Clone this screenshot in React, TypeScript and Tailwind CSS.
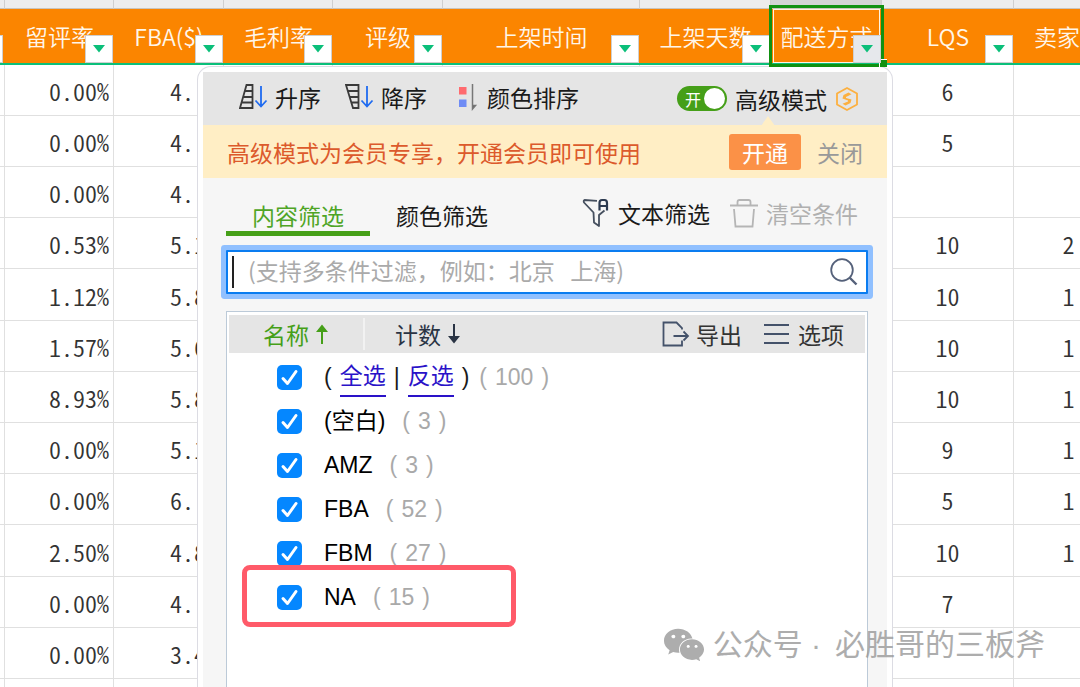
import { FaWeixin } from "react-icons/fa";

type Column = { name: string; width: string; selected?: boolean; filter?: boolean };

const columns: Column[] = [
  { name: "", width: "w-[5px]" },
  { name: "留评率", width: "w-[109px]", filter: true },
  { name: "FBA($)", width: "w-[110px]", filter: true },
  { name: "毛利率", width: "w-[109px]", filter: true },
  { name: "评级", width: "w-[110px]", filter: true },
  { name: "上架时间", width: "w-auto", filter: true },
  { name: "上架天数", width: "w-[131px]", filter: true },
  { name: "配送方式", width: "w-[111px]", selected: true, filter: true },
  { name: "LQS", width: "w-[132px]", filter: true },
  { name: "卖家", width: "w-[110px]" },
];

const rows = [
  { rate: "0.00%", fba: "4.", lqs: "6", sellers: "" },
  { rate: "0.00%", fba: "4.", lqs: "5", sellers: "" },
  { rate: "0.00%", fba: "4.", lqs: "", sellers: "" },
  { rate: "0.53%", fba: "5.1", lqs: "10", sellers: "2" },
  { rate: "1.12%", fba: "5.8", lqs: "10", sellers: "1" },
  { rate: "1.57%", fba: "5.6", lqs: "10", sellers: "1" },
  { rate: "8.93%", fba: "5.8", lqs: "10", sellers: "1" },
  { rate: "0.00%", fba: "5.1", lqs: "9", sellers: "1" },
  { rate: "0.00%", fba: "6.", lqs: "5", sellers: "1" },
  { rate: "2.50%", fba: "4.8", lqs: "10", sellers: "1" },
  { rate: "0.00%", fba: "4.", lqs: "7", sellers: "" },
  { rate: "0.00%", fba: "3.4", lqs: "", sellers: "" },
  { rate: "", fba: "", lqs: "", sellers: "" },
];

const options = [
  { name: "(空白)", count: 3 },
  { name: "AMZ", count: 3 },
  { name: "FBA", count: 52 },
  { name: "FBM", count: 27 },
  { name: "NA", count: 15, marked: true },
];

function SortIcon({ desc }: { desc?: boolean }) {
  return (
    <svg width="30" height="28" viewBox="0 0 30 28" fill="none" strokeWidth="1.8">
      {desc ? (
        <path d="M1 2H13.500V25H8ZM2.500 8H13.500M4.200 14H13.500M6 19.500H13.500" stroke="#3a3a3a" />
      ) : (
        <path d="M7.500 2H13.500V25H1ZM6.300 8H13.500M4.500 14H13.500M2.800 19.500H13.500" stroke="#3a3a3a" />
      )}
      <path d="M22 3V23.500M16.500 17.500L22 23.500L27.500 17.500" stroke="#1f6bf0" />
    </svg>
  );
}

function ColorSortIcon() {
  return (
    <svg width="30" height="28" viewBox="0 0 30 28">
      <rect x="8" y="4" width="7.500" height="7.500" fill="#ff6b6f" />
      <rect x="8" y="16.500" width="7.500" height="7.500" fill="#6f8cf5" />
      <path d="M21.500 1V26L24.500 22.500H21.500" fill="#555" stroke="#777" strokeWidth="1.500" />
    </svg>
  );
}

function MemberIcon() {
  return (
    <svg width="24" height="26" viewBox="0 0 24 26" fill="none" stroke="#fcb040" strokeLinejoin="round">
      <path d="M12 2L22 7.500V18.500L12 24L2 18.500V7.500Z" strokeWidth="1.800" />
      <path d="M13.500 6.500L16.500 8.200L11 11V12L16.500 13.500L15.500 17L10.500 19.500L7.500 17.800L13 15.500V14.500L7.500 12.500L8.500 9Z" fill="#fcb040" stroke="none" />
    </svg>
  );
}

function TextFilterIcon() {
  return (
    <svg width="28" height="30" viewBox="0 0 28 30" fill="none" stroke="#46505f" strokeWidth="1.800">
      <path d="M15 2.800L2.500 2Q1.200 2.500 2 4.500L11.500 14.500L12 24.500L17 28V17L22.500 12.500" strokeLinejoin="round" />
      <path d="M17.500 12.500V5Q17.500 2 20 2H22.500Q25 2 25 5V12.500M17.500 8H25" stroke="#2c3a50" strokeWidth="2.200" />
    </svg>
  );
}

function TrashIcon() {
  return (
    <svg width="28" height="30" viewBox="0 0 28 30" fill="none" stroke="#b5b5b5" strokeWidth="1.800">
      <path d="M0 7.500H28M7.500 7.500V4Q7.500 2 9.500 2H18.500Q20.500 2 20.500 4V7.500" />
      <path d="M4 11L5.500 28.500H22.500L24 11" />
    </svg>
  );
}

function SearchIcon() {
  return (
    <svg width="28" height="28" viewBox="0 0 28 28" fill="none" stroke="#55617a" strokeWidth="1.800">
      <circle cx="12" cy="12" r="10.800" />
      <path d="M19.500 19.500L26.500 26.500" strokeWidth="2.400" />
    </svg>
  );
}

function ExportIcon() {
  return (
    <svg width="28" height="26" viewBox="0 0 28 26" fill="none" stroke="#44526a" strokeWidth="1.800">
      <path d="M20 8.500V7L14.500 1.500H1.500V24.500H20V19.500" />
      <path d="M11.500 15H26M21.500 10.500L26 15L21.500 19.500" />
    </svg>
  );
}

function MenuIcon() {
  return (
    <svg width="26" height="26" viewBox="0 0 26 26" stroke="#44526a" strokeWidth="1.800">
      <path d="M0 4H25M0 13H25M0 22H25" />
    </svg>
  );
}

function Arrow({ down }: { down?: boolean }) {
  return (
    <svg width="14" height="20" viewBox="0 0 14 20" fill="currentColor">
      {down ? (
        <path d="M6 0H8V12H13L7 19.500L1 12H6Z" />
      ) : (
        <path d="M6 20H8V8H13L7 0.500L1 8H6Z" />
      )}
    </svg>
  );
}

function Check({ id, label }: { id: string; label?: string }) {
  return (
    <span className="grid h-[25px] w-[25px] shrink-0">
      <input
        id={id}
        type="checkbox"
        defaultChecked
        aria-label={label}
        className="col-start-1 row-start-1 h-full w-full appearance-none rounded-[5px] bg-[#c8c8c8] checked:bg-[#0587ff]"
      />
      <svg viewBox="0 0 25 25" fill="none" className="pointer-events-none col-start-1 row-start-1">
        <path d="M6 13.500L10.500 18.500L19 6.500" stroke="#fff" strokeWidth="3" strokeLinecap="round" strokeLinejoin="round" />
      </svg>
    </span>
  );
}

function Count({ value }: { value: number }) {
  return (
    <span className="flex gap-2 text-[#a9a9a9]">
      <span>(</span>
      <span>{value}</span>
      <span>)</span>
    </span>
  );
}

function Sheet() {
  return (
    <table className="w-[calc(100%+44px)] table-fixed border-separate border-spacing-0">
      <thead>
        <tr>
          {columns.map((c, i) => (
            <td
              key={i}
              className={`h-[9px] border-r border-b border-r-[#cfcfcf] border-b-[#c9c4bc] ${c.width} ${c.selected ? "bg-[#d4d4d4]" : "bg-[#ededed]"}`}
            />
          ))}
        </tr>
        <tr>
          {columns.map((c, i) => (
            <th
              key={i}
              className={`relative h-14 border-b-2 border-[#0bbf7a] bg-[#fb8500] p-0 text-[23px] font-[350] whitespace-nowrap text-[#fff6ea] ${i === 9 ? "pl-[20px] text-left" : ""}`}
            >
              {c.name}
              {i === 0 && <span className="absolute right-[2px] bottom-0 h-7 w-1 border border-l-0 border-[#cfcfcf] bg-white" />}
              {c.selected && (
                <span className="absolute -top-1 -right-[2px] -bottom-1 -left-[2px] z-20 border-3 border-[#119111] p-px">
                  <span className="block h-full border border-[#fff3e0]" />
                  <span className="absolute -right-[6px] -bottom-[3px] h-2 w-2 border-t border-l border-white bg-[#119111]" />
                </span>
              )}
              {c.filter && (
                <button
                  aria-label={`筛选${c.name}`}
                  className={`absolute right-px bottom-0 flex h-7 w-7 items-center justify-center border border-[#cfcfcf] ${c.selected ? "z-30 bg-[#e6e8ec]" : "bg-white"}`}
                >
                  <svg width="14" height="8" viewBox="0 0 14 8" fill="#0bbf7a">
                    <path d="M1 0H13L7 7.500Z" />
                  </svg>
                </button>
              )}
            </th>
          ))}
        </tr>
      </thead>
      <tbody className="text-2xl leading-8 font-[350] text-[#333] [font-feature-settings:'hwid'] [&_td]:border-r [&_td]:border-b [&_td]:border-[#e0e0e0] [&_td]:pt-[2px] [&_td]:pb-0">
        {rows.map((r, i) => (
          <tr key={i} className="h-[51px] nth-[5n]:h-[52px]">
            <td />
            <td className="pr-1 text-right">{r.rate}</td>
            <td className="pl-[56px]">{r.fba}</td>
            <td />
            <td />
            <td />
            <td />
            <td />
            <td className="text-center">{r.lqs}</td>
            <td className="text-center">{r.sellers}</td>
          </tr>
        ))}
      </tbody>
    </table>
  );
}

function FilterPanel() {
  return (
    <section className="absolute top-[66px] right-[187px] bottom-0 z-10 flex w-[696px] flex-col rounded-t-[14px] border border-b-0 border-[#dcdce3] bg-white px-[5px] pt-[5px] text-[23px] leading-8 text-[#1a1a1a]">
      <div className="flex h-[53px] shrink-0 items-center bg-[#e5e5e5] pr-7 pl-9">
        <div className="flex gap-6 pb-1">
          <button className="flex items-center gap-[6px]"><SortIcon />升序</button>
          <button className="flex items-center gap-[6px]"><SortIcon desc />降序</button>
          <button className="flex items-center gap-[6px]"><ColorSortIcon />颜色排序</button>
        </div>
        <div className="relative ml-auto flex items-center gap-2">
          <button
            role="switch"
            aria-checked="true"
            aria-labelledby="advanced"
            className="flex h-[25px] w-[50px] items-center justify-between rounded-full bg-[#459f18] pr-[2px] pl-2 text-base text-white"
          >
            开
            <span className="h-[21px] w-[21px] rounded-full bg-white" />
          </button>
          <span id="advanced">高级模式</span>
          <MemberIcon />
          <span className="absolute right-[84px] -bottom-[11px] border-x-7 border-b-10 border-x-transparent border-b-[#ffeec5]" />
        </div>
      </div>

      <div className="flex h-[53px] shrink-0 items-center gap-4 bg-[#ffeec5] px-6">
        <p className="mr-auto text-[#dc5a2c]">高级模式为会员专享，开通会员即可使用</p>
        <button className="h-9 w-[72px] rounded-[3px] bg-[#fb9147] text-white">开通</button>
        <button className="text-[#999]">关闭</button>
      </div>

      <div className="flex grow flex-col bg-[#f6f6f6] pr-[19px] pl-[23px]">
        <div className="flex h-[58px] items-end pr-[10px]">
          <button className="border-b-5 border-[#459f18] px-[26px] text-[#4fa526]">内容筛选</button>
          <button className="border-b-5 border-transparent px-[26px]">颜色筛选</button>
          <div className="mb-[7px] ml-auto flex gap-5">
            <button className="flex items-center gap-2"><TextFilterIcon />文本筛选</button>
            <button className="flex items-center gap-2 text-[#b0b0b0]"><TrashIcon />清空条件</button>
          </div>
        </div>

        <label className="mt-[14px] flex h-11 items-center rounded-[1px] border-2 border-[#0a7cf0] bg-white pr-2 pl-1 ring-5 ring-[#90c0ff]">
          <span className="h-8 w-[2px] bg-[#222]" />
          <input
            type="text"
            aria-label="搜索"
            placeholder="(支持多条件过滤，例如：北京   上海)"
            className="h-full min-w-0 grow bg-transparent pb-1 pl-[14px] outline-none placeholder:text-[#aaa]"
          />
          <SearchIcon />
        </label>

        <div className="mt-[17px] flex grow flex-col border border-b-0 border-[#bccad8] bg-white px-[2px] pt-[3px]">
          <div className="flex h-[38px] items-center bg-[#e5e5e5] pr-[21px] text-[#2a3444]">
            <button className="flex h-8 w-[136px] items-center gap-[6px] border-r-2 border-[#f2f2f2] pl-[34px] text-[#459f18]">
              名称
              <Arrow />
            </button>
            <button className="ml-[30px] flex items-center gap-[6px]">
              计数
              <Arrow down />
            </button>
            <div className="ml-auto flex gap-[22px] text-[#333]">
              <button className="flex items-center gap-[6px]"><ExportIcon />导出</button>
              <button className="flex items-center gap-2"><MenuIcon />选项</button>
            </div>
          </div>

          <ul className="pt-[2px] font-['Liberation_Sans','Noto_Sans_CJK_SC',sans-serif]">
            <li className="flex h-11 items-center pl-12">
              <Check id="all" label="全选" />
              <span className="flex items-center gap-2 pl-[22px] leading-[38px]">
                <span>(</span>
                <a href="#all" className="h-10 border-b-2 border-[#2a12c8] text-[#2a12c8]">全选</a>
                <span>|</span>
                <a href="#invert" className="h-10 border-b-2 border-[#2a12c8] text-[#2a12c8]">反选</a>
                <span>)</span>
              </span>
              <span className="pl-[10px]"><Count value={100} /></span>
            </li>
            {options.map((o) => (
              <li key={o.name} className="relative flex h-11 items-center pl-12">
                <Check id={o.name} />
                <label htmlFor={o.name} className="flex items-center gap-[17px] pl-[22px] text-black">
                  {o.name}
                  <Count value={o.count} />
                </label>
                {o.marked && (
                  <span className="pointer-events-none absolute -top-[10px] -bottom-2 left-[13px] w-[274px] rounded-lg border-5 border-[#ff5a69]" />
                )}
              </li>
            ))}
          </ul>
        </div>
      </div>
    </section>
  );
}

export default function App() {
  return (
    <main className="relative h-screen overflow-hidden bg-white font-['Noto_Sans_CJK_SC',sans-serif]">
      <Sheet />
      <FilterPanel />
      <div className="absolute right-[35px] bottom-5 z-40 flex items-center font-['Liberation_Sans','Noto_Sans_CJK_SC',sans-serif] text-[30px] leading-[44px] text-[#999] opacity-80">
        <FaWeixin className="mr-2 h-10 w-[42px]" />
        <span>公众号 ·</span>
        <span className="pl-[14px]">必胜哥的三板斧</span>
      </div>
    </main>
  );
}
